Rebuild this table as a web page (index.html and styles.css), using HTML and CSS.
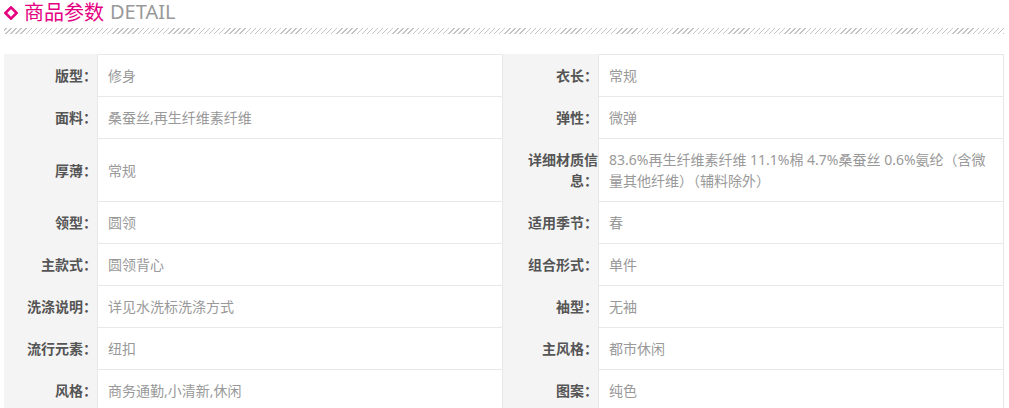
FILE: index.html
```html
<!DOCTYPE html>
<html lang="zh-CN">
<head>
<meta charset="utf-8">
<title>商品参数</title>
<link rel="stylesheet" href="styles.css">
</head>
<body>
<div class="detail">
  <h2 class="detail-title">
    <svg class="diamond" width="14" height="14" viewBox="0 0 14 14" aria-hidden="true"><polygon points="7,1.4 12.6,7 7,12.6 1.4,7" fill="none" stroke="#e4007f" stroke-width="2.6"/></svg>
    <span class="title-cn">商品参数</span>
    <span class="title-en">DETAIL</span>
  </h2>
  <div class="hatch"></div>
  <div class="params">
    <div class="label">版型：</div><div class="value">修身</div>
    <div class="label label-r">衣长：</div><div class="value value-r">常规</div>

    <div class="label">面料：</div><div class="value">桑蚕丝,再生纤维素纤维</div>
    <div class="label label-r">弹性：</div><div class="value value-r">微弹</div>

    <div class="label">厚薄：</div><div class="value">常规</div>
    <div class="label label-r">详细材质信息：</div><div class="value value-r">83.6%再生纤维素纤维 11.1%棉 4.7%桑蚕丝 0.6%氨纶（含微量其他纤维）（辅料除外）</div>

    <div class="label">领型：</div><div class="value">圆领</div>
    <div class="label label-r">适用季节：</div><div class="value value-r">春</div>

    <div class="label">主款式：</div><div class="value">圆领背心</div>
    <div class="label label-r">组合形式：</div><div class="value value-r">单件</div>

    <div class="label">洗涤说明：</div><div class="value">详见水洗标洗涤方式</div>
    <div class="label label-r">袖型：</div><div class="value value-r">无袖</div>

    <div class="label">流行元素：</div><div class="value">纽扣</div>
    <div class="label label-r">主风格：</div><div class="value value-r">都市休闲</div>

    <div class="label">风格：</div><div class="value">商务通勤,小清新,休闲</div>
    <div class="label label-r">图案：</div><div class="value value-r">纯色</div>
  </div>
</div>
</body>
</html>
```
FILE: styles.css
```css
html, body {
  margin: 0;
  padding: 0;
  background: #fff;
}

body {
  font-family: "Noto Sans", "Noto Sans CJK SC", sans-serif;
}

.detail {
  width: 1000px;
  margin-left: 4px;
}

.detail-title {
  display: flex;
  align-items: center;
  margin: 0;
  font-size: 20px;
  font-weight: normal;
  line-height: 24px;
}

.diamond {
  flex: none;
  margin-right: 6px;
  margin-top: 1px;
}

.title-cn {
  color: #e4007f;
  font-family: "Noto Sans CJK SC", sans-serif;
}

.title-en {
  color: #999;
  margin-left: 6px;
  font-family: "Noto Sans", sans-serif;
}

.hatch {
  height: 6px;
  margin-top: 4px;
  background: repeating-linear-gradient(-45deg, #c4c4c4 0 1px, transparent 1px 3.6px);
}

.params {
  display: grid;
  grid-template-columns: 93px 405px 96px 406px;
  margin-top: 20px;
  font-size: 14px;
  line-height: 21px;
}

.label,
.value {
  display: flex;
  align-items: center;
  padding: 10px 0;
  border-top: 1px solid #e8e8e8;
}

.label {
  justify-content: flex-end;
  text-align: right;
  background: #f4f4f4;
  border-top-color: #f4f4f4;
  color: #555;
  font-weight: bold;
  font-family: "Noto Sans CJK SC", sans-serif;
  padding-left: 14px;
}

.value {
  color: #999;
  border-left: 1px solid #e8e8e8;
  padding-left: 10px;
  padding-right: 10px;
}

.label-r {
  border-left: 1px solid #e8e8e8;
}

.value-r {
  border-right: 1px solid #e8e8e8;
}
```
